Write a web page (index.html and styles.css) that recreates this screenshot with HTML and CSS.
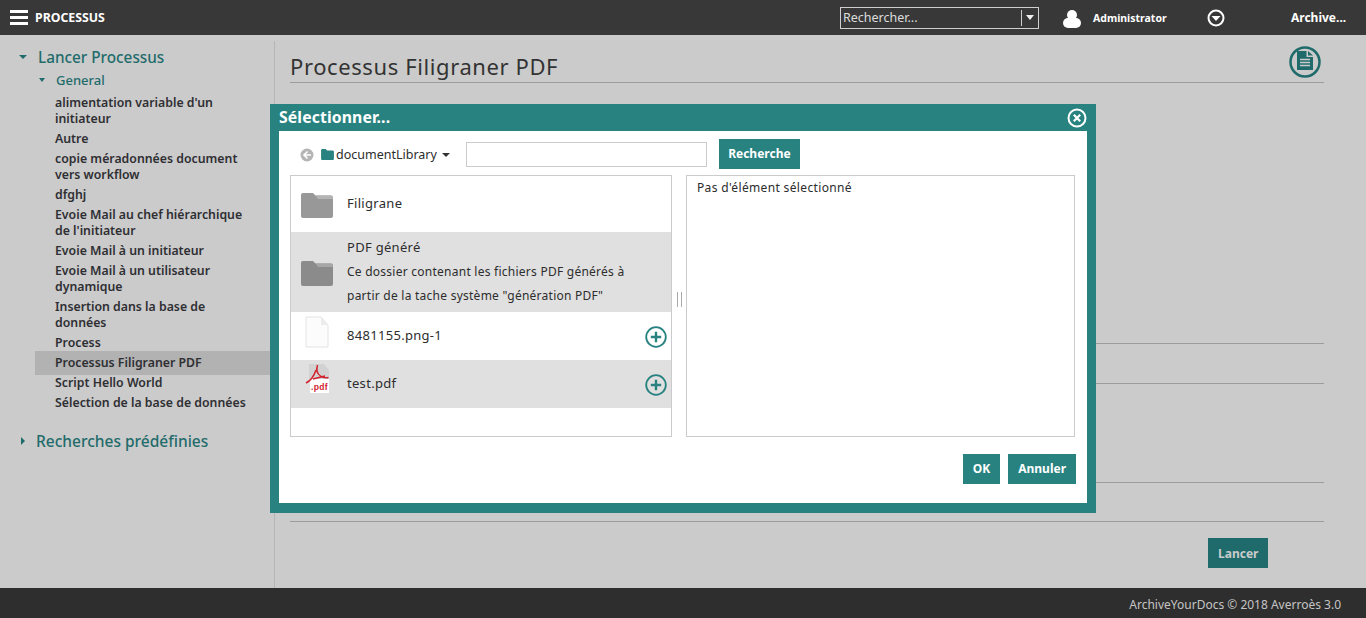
FILE: index.html
```html
<!DOCTYPE html>
<html lang="fr">
<head>
    <meta charset="UTF-8">
    <meta name="viewport" content="width=device-width, initial-scale=1.0">
    <title>Processus</title>
    <link rel="stylesheet" href="styles.css">
</head>
<body>

    <header class="topbar">
        <div class="burger"><span></span><span></span><span></span></div>
        <div class="app-name">PROCESSUS</div>
        <div class="top-search">
            <span class="top-search-text">Rechercher...</span>
            <span class="top-search-arrow"></span>
        </div>
        <svg class="user-icon" viewBox="0 0 18 18"><circle cx="9" cy="5" r="5" fill="#fff"/><rect x="0" y="8" width="18" height="10" rx="5" fill="#fff"/></svg>
        <div class="user-name">Administrator</div>
        <svg class="menu-icon" viewBox="0 0 18 18"><circle cx="9" cy="9" r="7.500" fill="none" stroke="#fff" stroke-width="2"/><path d="M4.500 7h9L9 12z" fill="#fff"/></svg>
        <div class="archive-link">Archive...</div>
    </header>

    <div class="page">
        <nav class="sidebar">
            <div class="tree-root"><span class="caret-down"></span>Lancer Processus</div>
            <div class="tree-group"><span class="caret-down small"></span>General</div>
            <ul class="tree-items">
                <li>alimentation variable d'un initiateur</li>
                <li>Autre</li>
                <li>copie méradonnées document vers workflow</li>
                <li>dfghj</li>
                <li>Evoie Mail au chef hiérarchique de l'initiateur</li>
                <li>Evoie Mail à un initiateur</li>
                <li>Evoie Mail à un utilisateur dynamique</li>
                <li>Insertion dans la base de données</li>
                <li>Process</li>
                <li class="active">Processus Filigraner PDF</li>
                <li>Script Hello World</li>
                <li>Sélection de la base de données</li>
            </ul>
            <div class="tree-root closed"><span class="caret-right"></span>Recherches prédéfinies</div>
        </nav>

        <main class="content">
            <div class="title-row">
                <h1>Processus Filigraner PDF</h1>
                <svg class="doc-icon" viewBox="0 0 32 32">
                    <circle cx="16" cy="16" r="14.500" fill="none" stroke="#1f6b6b" stroke-width="2.500"/>
                    <path d="M8 5h9.500v6H24v13H8z" fill="#1f6b6b"/>
                    <path d="M19 5l5 4.500h-5z" fill="#1f6b6b"/>
                    <path d="M11 13.500h10M11 16.500h10M11 19.500h10" stroke="#cbcbcb" stroke-width="1.400"/>
                </svg>
            </div>
            <div class="form-line line-a"></div>
            <div class="form-line line-b"></div>
            <div class="form-line line-c"></div>
            <div class="form-line line-d"></div>
            <div class="actions"><button class="btn btn-dim">Lancer</button></div>
        </main>
    </div>

    <footer class="footer">ArchiveYourDocs © 2018 Averroès 3.0</footer>

    <div class="dialog">
        <div class="dialog-title">
            <span>Sélectionner...</span>
            <svg class="close-icon" viewBox="0 0 20 20"><circle cx="10" cy="10" r="8.500" fill="none" stroke="#fff" stroke-width="2"/><path d="M6.800 6.800l6.400 6.400M13.200 6.800l-6.400 6.400" stroke="#fff" stroke-width="2.200"/></svg>
        </div>
        <div class="dialog-body">
            <div class="picker-bar">
                <svg class="back-icon" viewBox="0 0 14 14"><circle cx="7" cy="7" r="6.500" fill="#b5b5b5"/><path d="M7.500 3.500L4 7l3.500 3.500M4.500 7H11" fill="none" stroke="#fff" stroke-width="1.600"/></svg>
                <svg class="small-folder" viewBox="0 0 14 12"><path d="M0 1.500C0 .7 .6 0 1.500 0h3.500l1.500 1.500h6c.8 0 1.500 .7 1.500 1.500v7.500c0 .8-.7 1.500-1.500 1.500h-11C.6 12 0 11.300 0 10.500z" fill="#28827f"/></svg>
                <span class="lib-name">documentLibrary</span>
                <span class="lib-caret"></span>
                <input class="picker-input" type="text">
                <button class="btn btn-search">Recherche</button>
            </div>

            <div class="panes">
                <div class="pane pane-left">
                    <div class="row row-folder">
                        <svg class="folder" viewBox="0 0 32 25"><path d="M0 2C0 .9 .9 0 2 0h10l2.500 2.500H30c1.100 0 2 .9 2 2V23c0 1.100-.9 2-2 2H2c-1.100 0-2-.9-2-2z" fill="#989898"/><path d="M14.500 2.500H30c1.100 0 2 .9 2 2V6H17z" fill="#b4b4b4"/></svg>
                        <div class="row-text">Filigrane</div>
                    </div>
                    <div class="row row-desc alt">
                        <svg class="folder" viewBox="0 0 32 25"><path d="M0 2C0 .9 .9 0 2 0h10l2.500 2.500H30c1.100 0 2 .9 2 2V23c0 1.100-.9 2-2 2H2c-1.100 0-2-.9-2-2z" fill="#8b8b8b"/><path d="M14.500 2.500H30c1.100 0 2 .9 2 2V6H17z" fill="#a6a6a6"/></svg>
                        <div class="row-text">
                            <div>PDF généré</div>
                            <div class="row-note">Ce dossier contenant les fichiers PDF générés à partir de la tache système "génération PDF"</div>
                        </div>
                    </div>
                    <div class="row row-file">
                        <svg class="file" viewBox="0 0 24 32"><path d="M1 1h15l7 8v22H1z" fill="#fcfcfc" stroke="#e4e4e4"/><path d="M16 1v8h7z" fill="#ececec"/></svg>
                        <div class="row-text">8481155.png-1</div>
                        <svg class="add-icon" viewBox="0 0 22 22"><circle cx="11" cy="11" r="9.800" fill="none" stroke="#28827f" stroke-width="1.800"/><path d="M11 5.800v10.400M5.800 11h10.400" stroke="#28827f" stroke-width="2.400"/></svg>
                    </div>
                    <div class="row row-file alt">
                        <svg class="file" viewBox="0 0 24 32">
                            <path d="M4 0h15l5 6v10H4z" fill="#d2d2d2"/>
                            <path d="M5 15h19v14H5z" fill="#fff"/>
                            <path d="M12.500 1c-1.500 5 0 9 3 11 2 1.500 5 2 8 1.500M1 19c4-2 8-7 10-13M8 15l12-3" fill="none" stroke="#d2222d" stroke-width="1.500"/>
                            <text class="pdf-label" x="14.500" y="26">.pdf</text>
                        </svg>
                        <div class="row-text">test.pdf</div>
                        <svg class="add-icon" viewBox="0 0 22 22"><circle cx="11" cy="11" r="9.800" fill="none" stroke="#28827f" stroke-width="1.800"/><path d="M11 5.800v10.400M5.800 11h10.400" stroke="#28827f" stroke-width="2.400"/></svg>
                    </div>
                </div>
                <div class="splitter"></div>
                <div class="pane pane-right">Pas d'élément sélectionné</div>
            </div>

            <div class="dialog-actions">
                <button class="btn">OK</button>
                <button class="btn">Annuler</button>
            </div>
        </div>
    </div>

</body>
</html>
```

FILE: styles.css
```css
* {
    box-sizing: border-box;
}
html, body {
    height: 100%;
}
body {
    margin: 0;
    height: 618px;
    overflow: hidden;
    display: flex;
    flex-direction: column;
    background-color: #cbcbcb;
    font-family: "Noto Sans", Arial, sans-serif;
    font-size: 13px;
    color: #2d2d2d;
}

/* barre du haut */
.topbar {
    height: 35px;
    flex: none;
    display: flex;
    align-items: center;
    background-color: #383838;
    color: #fff;
}
.burger {
    width: 18px;
    margin-left: 10px;
    display: flex;
    flex-direction: column;
    gap: 3px;
}
.burger span {
    display: block;
    height: 3px;
    background-color: #fff;
}
.app-name {
    margin-left: 7px;
    width: 805px;
    font-size: 12.300px;
    font-weight: 700;
}
.top-search {
    width: 199px;
    height: 22px;
    border: 1px solid #cfcfcf;
    display: flex;
    align-items: center;
    justify-content: space-between;
    padding-left: 2px;
    font-size: 12.500px;
    color: #ddd;
}
.top-search-arrow {
    width: 17px;
    height: 16px;
    border-left: 1px solid #cfcfcf;
    position: relative;
}
.top-search-arrow::after {
    content: "";
    position: absolute;
    left: 4px;
    top: 5px;
    border-left: 4.500px solid transparent;
    border-right: 4.500px solid transparent;
    border-top: 5px solid #eee;
}
.user-icon {
    width: 18px;
    height: 18px;
    margin: 3px 0 0 24px;
}
.user-name {
    margin-left: 12px;
    width: 114px;
    font-size: 10.500px;
    font-weight: 700;
}
.menu-icon {
    width: 18px;
    height: 18px;
}
.archive-link {
    margin-left: 66px;
    font-size: 12px;
    font-weight: 700;
}

/* colonne de gauche */
.page {
    flex: 1;
    display: flex;
    min-height: 0;
}
.sidebar {
    width: 275px;
    flex: none;
    margin-top: 6px;
    padding-top: 5px;
    border-right: 1px solid #b5b5b5;
}
.tree-root {
    display: flex;
    align-items: center;
    padding-left: 19px;
    height: 22px;
    font-size: 15.300px;
    font-weight: 500;
    color: #1f6b6b;
}
.tree-root.closed {
    margin-top: 17px;
    padding-left: 21px;
    font-size: 15.500px;
}
.tree-group {
    display: flex;
    align-items: center;
    padding-left: 39px;
    margin-top: 1px;
    height: 22px;
    font-size: 13px;
    font-weight: 500;
    color: #1f6b6b;
}
.caret-down {
    width: 0;
    margin-right: 11px;
    border-left: 4px solid transparent;
    border-right: 4px solid transparent;
    border-top: 4px solid #1f6b6b;
}
.caret-down.small {
    margin-right: 11px;
    border-left-width: 3px;
    border-right-width: 3px;
    border-top-width: 4px;
}
.caret-right {
    width: 0;
    margin-right: 11px;
    border-top: 4px solid transparent;
    border-bottom: 4px solid transparent;
    border-left: 4px solid #1f6b6b;
}
.tree-items {
    list-style: none;
    margin: 2px 0 0 35px;
    padding: 0;
    font-size: 12.300px;
    font-weight: 600;
    line-height: 16px;
    color: #2f2f33;
}
.tree-items li {
    padding: 2px 20px;
    margin-right: 4px;
}
.tree-items li.active {
    background-color: #b2b2b2;
    padding-top: 4px;
    padding-bottom: 4px;
    margin-top: -2px;
    margin-bottom: -2px;
}

/* contenu */
.content {
    flex: 1;
    padding: 6px 42px 0 15px;
    display: flex;
    flex-direction: column;
}
.title-row {
    height: 42px;
    flex: none;
    display: flex;
    justify-content: space-between;
    border-bottom: 1px solid #9c9c9c;
}
.title-row h1 {
    margin: 11px 0 0;
    font-size: 22px;
    line-height: 28px;
    letter-spacing: .6px;
    font-weight: 400;
    color: #333;
}
.doc-icon {
    width: 32px;
    height: 32px;
    margin-right: 3px;
    margin-top: 5px;
}
.form-line {
    border-bottom: 1px solid #9c9c9c;
    flex: none;
}
.line-a {
    height: 261px;
}
.line-b {
    height: 40px;
}
.line-c {
    height: 99px;
}
.line-d {
    height: 39px;
}
.actions {
    display: flex;
    justify-content: flex-end;
    margin-top: 16px;
    padding-right: 56px;
}
.btn {
    height: 30px;
    padding: 0 10px;
    border: none;
    background-color: #28827f;
    color: #fff;
    font-family: inherit;
    font-size: 12px;
    font-weight: 700;
    cursor: pointer;
}
.dialog .btn {
    padding-bottom: 2px;
}
.btn-dim {
    width: 60px;
    background-color: #1f6b6b;
    color: #cbcbcb;
}

/* pied de page */
.footer {
    height: 30px;
    flex: none;
    padding-right: 25px;
    background-color: #2e2e2e;
    color: #c5c5c5;
    font-size: 12px;
    line-height: 34px;
    text-align: right;
}

/* fenêtre de sélection */
.dialog {
    position: absolute;
    left: 270px;
    top: 104px;
    width: 826px;
    height: 409px;
    padding: 0 9px 10px;
    background-color: #28827f;
    display: flex;
    flex-direction: column;
}
.dialog-title {
    height: 27px;
    flex: none;
    display: flex;
    align-items: center;
    justify-content: space-between;
    color: #fff;
    font-size: 15.800px;
    font-weight: 700;
}
.dialog-title span {
    margin-top: -2px;
    letter-spacing: .1px;
}
.close-icon {
    width: 20px;
    height: 20px;
}
.dialog-body {
    flex: 1;
    background-color: #fff;
    padding: 8px 11px 0;
}
.picker-bar {
    display: flex;
    align-items: center;
    height: 30px;
}
.back-icon {
    width: 14px;
    height: 14px;
    margin: 1px 0 0 10px;
}
.small-folder {
    width: 13px;
    height: 11px;
    margin-left: 7px;
}
.lib-name {
    margin-left: 2px;
    font-size: 12.500px;
}
.lib-caret {
    margin: 1px 0 0 5px;
    border-left: 4px solid transparent;
    border-right: 4px solid transparent;
    border-top: 4px solid #333;
}
.picker-input {
    width: 241px;
    height: 25px;
    margin: 0 12px 0 16px;
    border: 1px solid #cbcbcb;
}
.btn-search {
    width: 81px;
    padding-left: 0;
    padding-right: 0;
}
.panes {
    display: flex;
    margin-top: 6px;
    height: 262px;
}
.pane {
    border: 1px solid #cbcbcb;
}
.pane-left {
    width: 382px;
}
.pane-right {
    width: 389px;
    padding: 4px 10px;
    font-size: 12px;
    letter-spacing: .35px;
    line-height: 16px;
}
.splitter {
    width: 14px;
    margin: 117px 0 128px;
}
.splitter::after {
    content: "";
    display: block;
    width: 3px;
    height: 15px;
    margin: 0 auto;
    border-left: 1px solid #aaa;
    border-right: 1px solid #aaa;
}
.row {
    position: relative;
    display: flex;
    align-items: center;
    padding-left: 10px;
    font-size: 13px;
    letter-spacing: .3px;
}
.row.alt {
    background-color: #e0e0e0;
}
.row-folder {
    height: 56px;
}
.row-folder .row-text {
    margin-top: -2px;
}
.row-desc {
    height: 80px;
}
.row-desc .row-text {
    padding-top: 2px;
}
.row-file {
    height: 48px;
}
.folder {
    width: 32px;
    height: 25px;
    flex: none;
    margin-top: 3px;
}
.file {
    width: 24px;
    height: 32px;
    flex: none;
    margin: -8px 4px 0 4px;
}
.row-text {
    margin-left: 14px;
    flex: 1;
}
.row-file .row-text {
    margin-top: -2px;
}
.row-note {
    max-width: 290px;
    font-size: 12px;
    letter-spacing: .25px;
    line-height: 24px;
    margin-top: 4px;
}
.add-icon {
    position: absolute;
    right: 4px;
    top: 14px;
    width: 22px;
    height: 22px;
}
.pdf-label {
    font-family: "Liberation Sans", Arial, sans-serif;
    font-size: 8.500px;
    font-weight: 700;
    fill: #d2222d;
    text-anchor: middle;
}
.dialog-actions {
    display: flex;
    justify-content: flex-end;
    gap: 8px;
    margin-top: 17px;
}
```
